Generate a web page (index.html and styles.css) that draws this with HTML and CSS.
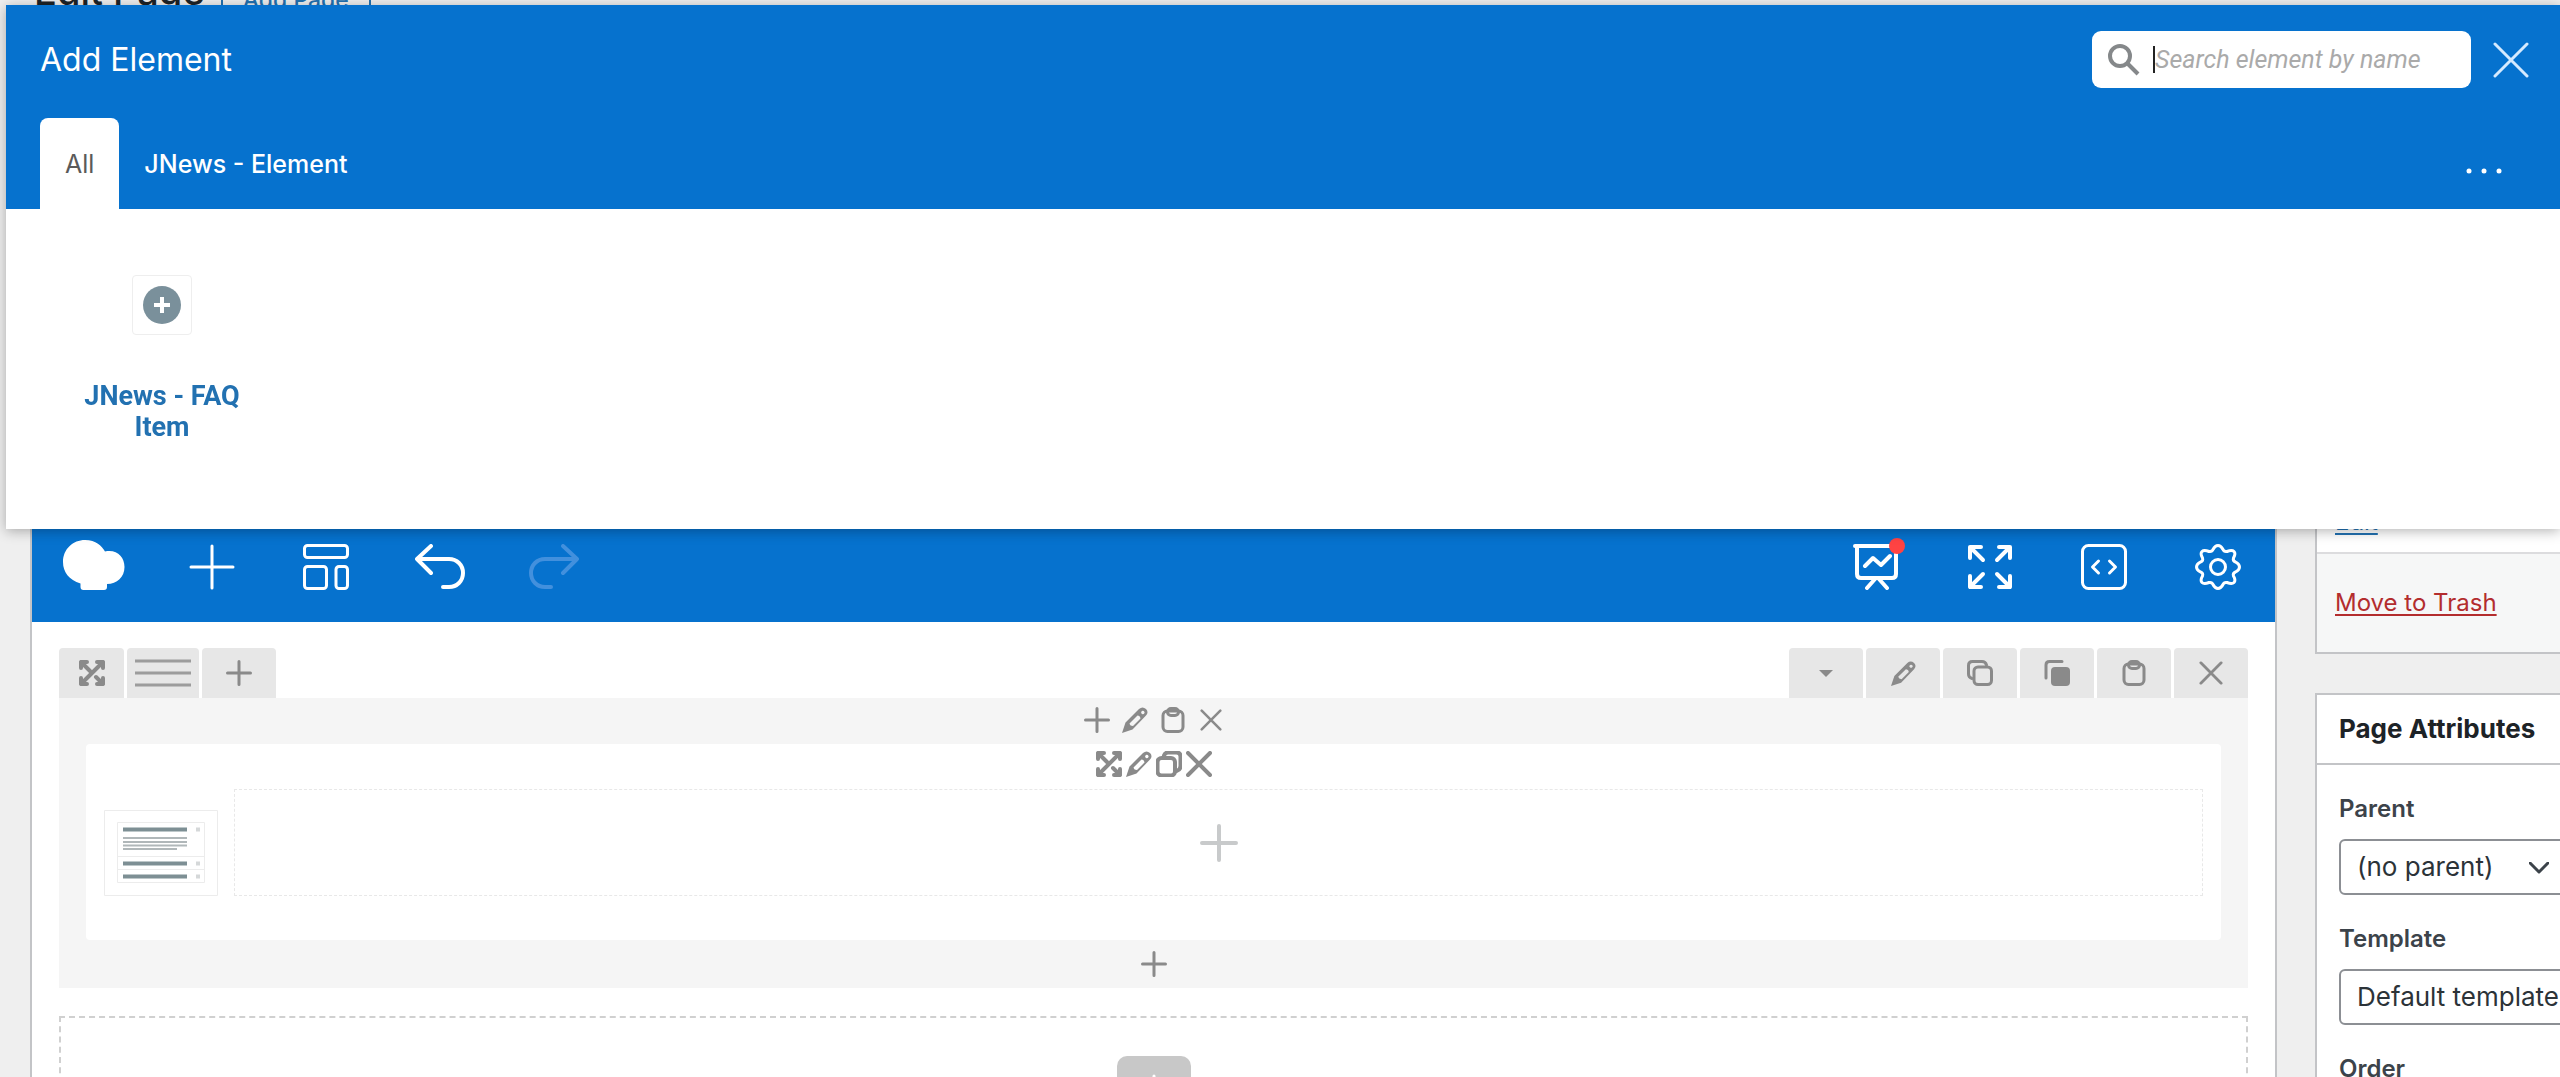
FILE: index.html
```html
<!DOCTYPE html>
<html lang="en">
<head>
<meta charset="utf-8">
<meta name="viewport" content="width=device-width, initial-scale=1">
<title>Edit Page</title>
<link rel="stylesheet" href="styles.css">
</head>
<body>
<svg class="sprite" aria-hidden="true">
  <symbol id="plus" viewBox="0 0 26 26"><path d="M13 1.500v23M1.500 13h23"/></symbol>
  <symbol id="close" viewBox="0 0 26 26"><path d="M2 2l22 22M24 2L2 24"/></symbol>
  <symbol id="move" viewBox="0 0 26 26"><path d="M2 8V2h6M18 2h6v6M24 18v6h-6M8 24H2v-6M2 2l9 9M24 2L2 24M17 17l7 7"/></symbol>
  <symbol id="pencil" viewBox="0 0 26 26"><path class="solid" fill-rule="evenodd" d="M0 26L3.500 15.500 17 2Q20.500-1 24 2Q27 5 24 8.500L10.500 22.500ZM7.500 16.500l8-8q2.500 0 3 3L11 19q-3 0-3.500-2.500ZM20.800 3.800a1.700 1.700 0 1 0 0.100 0Z"/></symbol>
  <symbol id="copy" viewBox="0 0 26 26"><rect x="7" y="7" width="17.500" height="17.500" rx="4"/><path d="M5 18.500Q1.500 17.500 1.500 14V5.500Q1.500 1.500 5.500 1.500H15Q18.500 1.500 19.500 5"/></symbol>
  <symbol id="copy-back" viewBox="0 0 26 26"><rect x="1.500" y="7" width="17.500" height="17.500" rx="4"/><path d="M8 4.500Q9 1.500 12 1.500h8.500q4 0 4 4V15q0 4-4 5"/></symbol>
  <symbol id="duplicate" viewBox="0 0 26 26"><rect class="solid" x="7" y="7" width="19" height="19" rx="4"/><path d="M2 18V5q0-3.500 3.500-3.500H18"/></symbol>
  <symbol id="clipboard" viewBox="0 0 26 26"><rect x="3" y="4" width="20" height="20.500" rx="4.500"/><rect x="7.500" y="1.500" width="11" height="7" rx="3.500"/></symbol>
</svg>

<div class="wrap">
  <header class="page-head">
    <h1>Edit Page</h1>
    <a class="add-page" href="#">Add Page</a>
  </header>

  <div class="columns">
    <main class="editor">
      <nav class="navbar" aria-label="Editor tools">
        <a class="logo" href="#" aria-label="Page builder"><svg width="62" height="50" viewBox="0 0 62 50"><path d="M22 0C33 0 39 6 42 11.500C54 9 61.500 17 61.500 27C61.500 37 54 44 44 44V47Q44 50 41 50H20.500Q17.500 50 17.500 47V43.500C6 40 0 32 0 22C0 9 10 0 22 0Z"/></svg></a>
        <button type="button" aria-label="Add new element"><svg width="46" height="46" viewBox="0 0 46 46"><path d="M23 2v42M2 23h42"/></svg></button>
        <button type="button" aria-label="Templates"><svg width="46" height="46" viewBox="0 0 46 46"><rect x="1.500" y="1.500" width="43" height="12" rx="3"/><rect x="1.500" y="22.500" width="22" height="22" rx="3"/><rect x="33" y="22.500" width="11.500" height="22" rx="3"/></svg></button>
        <button type="button" aria-label="Undo"><svg class="bold" width="50" height="46" viewBox="0 0 50 46"><path d="M16 2L2 15L16 29M2 15H34C42 15 48 21 48 29C48 37 42 43 34 43H28"/></svg></button>
        <button type="button" aria-label="Redo" disabled><svg class="bold" width="50" height="46" viewBox="0 0 50 46"><path d="M34 2L48 15L34 29M48 15H16C8 15 2 21 2 29C2 37 8 43 16 43H22"/></svg></button>
        <span class="spacer"></span>
        <button type="button" class="insights" aria-label="Insights"><svg class="bold" width="46" height="46" viewBox="0 0 46 46"><path d="M2 2h42M4 2v28q0 4 4 4h31q4 0 4-4V2M14 44l8-9M34 44l-8-9M12 22l8-8 8 7 9-9"/></svg><span class="badge"></span></button>
        <button type="button" aria-label="Fullscreen"><svg class="bold" width="46" height="46" viewBox="0 0 46 46"><path d="M3 14V3h11M3 3l13 13M32 3h11v11M43 3L30 16M43 32v11H32M43 43L30 30M14 43H3V32M3 43l13-13"/></svg></button>
        <button type="button" aria-label="Custom code"><svg width="46" height="46" viewBox="0 0 46 46"><rect x="1.500" y="1.500" width="43" height="43" rx="6"/><path d="M17.500 17l-6 6 6 6M28.500 17l6 6-6 6"/></svg></button>
        <button type="button" aria-label="Settings"><svg width="46" height="46" viewBox="0 0 46 46"><circle cx="23" cy="23" r="7.500"/><path d="M23 1.500Q26 1.500 28 5.500Q29 8 32 7.500Q37 5.500 39 7.500Q41 9.500 38.500 14Q37.500 17 40.500 18Q44.500 20 44.500 23Q44.500 26 40.500 28Q37.500 29 38.500 32Q41 36.500 39 38.500Q37 40.500 32 38.500Q29 38 28 40.500Q26 44.500 23 44.500Q20 44.500 18 40.500Q17 38 14 38.500Q9 40.500 7 38.500Q5 36.500 7.500 32Q8.500 29 5.500 28Q1.500 26 1.500 23Q1.500 20 5.500 18Q8.500 17 7.500 14Q5 9.500 7 7.500Q9 5.500 14 7.500Q17 8 18 5.500Q20 1.500 23 1.500Z"/></svg></button>
      </nav>

      <div class="canvas">
        <section class="row">
          <div class="row-controls">
            <button type="button" class="drag" aria-label="Move row"><svg class="bold" width="26" height="26"><use href="#move"/></svg></button>
            <button type="button" class="layout" aria-label="Change layout"><svg width="56" height="28" viewBox="0 0 56 28"><path class="flat" d="M0 2h56M0 14h56M0 26h56"/></svg></button>
            <button type="button" aria-label="Add column"><svg width="26" height="26"><use href="#plus"/></svg></button>
            <span class="spacer"></span>
            <button type="button" aria-label="Toggle row"><svg width="14" height="7" viewBox="0 0 14 7"><path class="solid" d="M0 0h14L7 7z"/></svg></button>
            <button type="button" aria-label="Edit row"><svg width="25" height="25"><use href="#pencil"/></svg></button>
            <button type="button" aria-label="Clone row"><svg width="26" height="26"><use href="#copy"/></svg></button>
            <button type="button" aria-label="Copy row"><svg width="26" height="26"><use href="#duplicate"/></svg></button>
            <button type="button" aria-label="Paste"><svg width="26" height="26"><use href="#clipboard"/></svg></button>
            <button type="button" aria-label="Delete row"><svg width="24" height="24"><use href="#close"/></svg></button>
          </div>

          <div class="column">
            <div class="column-controls">
              <button type="button" aria-label="Prepend element"><svg width="26" height="26"><use href="#plus"/></svg></button>
              <button type="button" aria-label="Edit column"><svg width="26" height="26"><use href="#pencil"/></svg></button>
              <button type="button" aria-label="Paste into column"><svg width="26" height="26"><use href="#clipboard"/></svg></button>
              <button type="button" aria-label="Delete column"><svg width="22" height="22"><use href="#close"/></svg></button>
            </div>
            <div class="element">
              <div class="element-controls">
                <button type="button" aria-label="Move element"><svg width="26" height="26"><use href="#move"/></svg></button>
                <button type="button" aria-label="Edit element"><svg width="26" height="26"><use href="#pencil"/></svg></button>
                <button type="button" aria-label="Clone element"><svg width="26" height="26"><use href="#copy-back"/></svg></button>
                <button type="button" aria-label="Delete element"><svg width="26" height="26"><use href="#close"/></svg></button>
              </div>
              <div class="element-body">
                <svg class="thumb" width="114" height="86" viewBox="0 0 114 86">
                  <rect class="frame" x="0.500" y="0.500" width="113" height="85"/>
                  <path class="frame" d="M13.500 12.500h87v60h-87zM13.500 46.500h87M13.500 59.500h87"/>
                  <path class="bars" d="M19 19.500h64M19 53.500h64M19 66.500h64"/>
                  <path class="lines" d="M19 28h64M19 32h64M19 35.500h64M19 39h54"/>
                  <path class="dots" d="M92 19.500h4M92 53.500h4M92 66.500h4"/>
                </svg>
                <button type="button" class="drop" aria-label="Add child element"><svg width="38" height="38" viewBox="0 0 38 38"><path d="M19 2v34M2 19h34"/></svg></button>
              </div>
            </div>
            <div class="column-foot">
              <button type="button" aria-label="Append element"><svg width="26" height="26"><use href="#plus"/></svg></button>
            </div>
          </div>
        </section>

        <div class="new-row">
          <button type="button" aria-label="Add row"><svg width="38" height="38" viewBox="0 0 38 38"><path d="M19 2v34M2 19h34"/></svg></button>
        </div>
      </div>
    </main>

    <aside class="sidebar">
      <section class="box publish">
        <div class="publish-info"><a href="#">Edit</a></div>
        <div class="publish-foot"><a class="trash" href="#">Move to Trash</a></div>
      </section>
      <section class="box">
        <h2>Page Attributes</h2>
        <div class="fields">
          <label for="parent">Parent</label>
          <div class="select parent">
            <select id="parent"><option>(no parent)</option></select>
            <svg width="20" height="12" viewBox="0 0 20 12"><path d="M1 1l9 9 9-9"/></svg>
          </div>
          <label for="template">Template</label>
          <div class="select template">
            <select id="template"><option>Default template</option></select>
            <svg width="20" height="12" viewBox="0 0 20 12"><path d="M1 1l9 9 9-9"/></svg>
          </div>
          <span class="field-name">Order</span>
        </div>
      </section>
    </aside>
  </div>
</div>

<div class="modal" role="dialog" aria-labelledby="modal-title">
  <div class="modal-head">
    <div class="modal-top">
      <h2 id="modal-title">Add Element</h2>
      <label class="search">
        <svg width="32" height="32" viewBox="0 0 32 32"><circle cx="12" cy="12" r="10"/><path d="M20 20l10 10"/></svg>
        <span class="caret"></span>
        <input type="search" placeholder="Search element by name" aria-label="Search element by name">
      </label>
      <button type="button" class="modal-close" aria-label="Close"><svg width="36" height="36" viewBox="0 0 36 36"><path d="M2 2l32 32M34 2L2 34"/></svg></button>
    </div>
    <div class="tabs">
      <button type="button" class="tab active">All</button>
      <button type="button" class="tab">JNews - Element</button>
      <span class="spacer"></span>
      <button type="button" class="more" aria-label="More"><svg width="36" height="6" viewBox="0 0 36 6"><circle cx="3" cy="3" r="2.500"/><circle cx="18" cy="3" r="2.500"/><circle cx="33" cy="3" r="2.500"/></svg></button>
    </div>
  </div>
  <div class="modal-body">
    <a class="item" href="#">
      <span class="item-icon"><svg width="38" height="38" viewBox="0 0 38 38"><circle cx="19" cy="19" r="19"/><path d="M19 11v16M11 19h16"/></svg></span>
      JNews - FAQ Item
    </a>
  </div>
</div>
</body>
</html>
```
FILE: styles.css
```css
* { box-sizing: border-box; }

body {
  margin: 0;
  height: 100vh;
  overflow: hidden;
  background: #efefef;
  color: #3c434a;
  font: 24px/32px Inter, "Open Sans", sans-serif;
}

button {
  padding: 0;
  border: 0;
  background: none;
  color: inherit;
  font: inherit;
}

button, .logo {
  display: flex;
  align-items: center;
  justify-content: center;
}

svg {
  display: block;
  flex: none;
  fill: none;
  stroke: currentColor;
  stroke-width: 3;
  stroke-linecap: round;
  stroke-linejoin: round;
}

.solid { fill: currentColor; stroke: none; }
.flat { stroke-linecap: butt; stroke-width: 3; }
.bold { stroke-width: 4; }
.sprite { position: absolute; width: 0; height: 0; }
.spacer { flex: 1; }

/* Page behind the dialog, scrolled up under it */
.wrap { margin-top: -33px; padding-left: 30px; }

.page-head {
  display: flex;
  gap: 16px;
  height: 48px;
  padding-left: 4px;
}

h1 {
  margin: 0;
  color: #1d2327;
  font-size: 38px;
  font-weight: 500;
  line-height: 48px;
}

.add-page {
  height: 44px;
  margin-top: 9px;
  padding: 6px 20px;
  border: 2px solid #2271b1;
  border-radius: 4px;
  color: #2271b1;
  font-size: 23px;
  font-weight: 500;
  text-decoration: none;
}

.columns {
  display: flex;
  align-items: flex-start;
  gap: 38px;
  padding-top: 497px;
}

.editor {
  flex: 1;
  min-width: 0;
  border: 2px solid #c3c4c7;
  border-width: 0 2px;
  background: #fff;
}

.navbar {
  display: flex;
  height: 110px;
  background: #0672ce;
  color: #fff;
}

.navbar button { width: 114px; }
.navbar button:disabled { color: #4290dd; }
.logo { width: 123px; padding-bottom: 4px; color: #fff; }
.logo svg { fill: currentColor; stroke: none; }

.insights { position: relative; }
.badge {
  position: absolute;
  top: 26px;
  right: 28px;
  width: 16px;
  height: 16px;
  border-radius: 50%;
  background: #ff4343;
}

.canvas { padding: 26px 27px 0; }

.row-controls {
  display: flex;
  gap: 3px;
  color: #8a8a8a;
}

.row-controls button {
  width: 74px;
  height: 50px;
  border-radius: 4px 4px 0 0;
  background: #e7e7e7;
}

.row-controls .drag { width: 65px; }
.row-controls .layout { width: 72px; color: #9c9c9c; }

.column {
  padding: 0 27px;
  background: #f5f5f5;
  color: #8a8a8a;
}

.column-controls, .column-foot {
  display: flex;
  justify-content: center;
  align-items: center;
  gap: 12px;
  height: 46px;
  padding-bottom: 2px;
}

.column-controls button { width: 26px; }
.column-foot { height: 48px; padding: 0; }

.element {
  padding: 7px 18px 44px;
  border-radius: 4px;
  background: #fff;
}

.element-controls {
  display: flex;
  justify-content: center;
  align-items: center;
  gap: 4px;
  height: 26px;
}

.element-controls svg { stroke-width: 4; }

.element-body {
  display: flex;
  align-items: flex-end;
  gap: 16px;
  padding-top: 12px;
}

.thumb { stroke-width: 1; stroke-linecap: butt; }
.frame { stroke: #ececec; }
.bars { stroke: #7d8f94; stroke-width: 4; }
.lines { stroke: #b0b7b9; stroke-width: 2; }
.dots { stroke: #d5d8d9; stroke-width: 4; }

.drop {
  flex: 1;
  height: 107px;
  border: 1px dashed #e8e8e8;
  color: #c8cacb;
}

.drop svg { stroke-width: 4; }

.new-row {
  display: flex;
  justify-content: center;
  height: 160px;
  margin-top: 28px;
  padding-top: 38px;
  border: 2px dashed #d0d0d0;
}

.new-row button {
  width: 74px;
  height: 74px;
  border-radius: 10px;
  background: #c8c8c8;
  color: #fff;
}

.sidebar { width: 245px; overflow: hidden; }

.box {
  border: 2px solid #c3c4c7;
  border-right: 0;
  background: #fff;
}

.publish { border-top: 0; margin-bottom: 39px; }
.publish-info { height: 42px; padding: 0 18px; border-bottom: 2px solid #dcdcde; line-height: 20px; }
.publish-foot { padding: 33px 18px; background: #f6f7f7; }
.sidebar a { color: #2271b1; text-underline-offset: 3px; }
.sidebar .trash { color: #b32d2e; }

.box h2 {
  margin: 0;
  padding: 18px 22px;
  border-bottom: 2px solid #c3c4c7;
  color: #1d2327;
  font-size: 26px;
  font-weight: 700;
  line-height: 32px;
  white-space: nowrap;
}

.fields { padding: 28px 22px 40px; }
.fields label, .field-name { display: block; font-weight: 600; }

.select {
  position: relative;
  width: 234px;
  margin: 14px 0 28px;
}

.select.template { width: 300px; }

select {
  display: block;
  width: 100%;
  height: 56px;
  padding: 0 16px;
  border: 2px solid #8c8f94;
  border-radius: 6px;
  background: #fff;
  color: #2c3338;
  font: 26px/32px Inter, "Open Sans", sans-serif;
  appearance: none;
}

.select svg {
  position: absolute;
  top: 23px;
  right: 24px;
}

/* Dialog */
.modal {
  position: fixed;
  inset: 5px 0 auto 6px;
  background: #fff;
  box-shadow: 0 2px 12px rgba(0, 0, 0, 0.3);
}

.modal-head { background: #0672ce; color: #fff; }

.modal-top {
  display: flex;
  align-items: flex-start;
  height: 113px;
  padding: 26px 31px 0 34px;
}

.modal h2 {
  flex: 1;
  margin: 0;
  padding-top: 9px;
  font-size: 32px;
  font-weight: 400;
  line-height: 40px;
}

.search {
  display: flex;
  align-items: center;
  width: 379px;
  height: 57px;
  padding-left: 16px;
  border-radius: 9px;
  background: #fff;
  color: #85888a;
}

.search svg { stroke-width: 4; stroke-linecap: butt; }
.caret { width: 2px; height: 27px; margin-left: 13px; background: #222; }

.search input {
  flex: 1;
  min-width: 0;
  padding: 0;
  border: 0;
  outline: 0;
  background: none;
  font: italic 25px/32px Roboto, sans-serif;
}

.search input::placeholder { color: #aaa; opacity: 1; }
.modal-close { height: 57px; margin-left: 22px; color: #d5eaff; }

.tabs { display: flex; padding: 0 58px 0 34px; }

.tab {
  height: 91px;
  padding: 0 25px;
  border-radius: 8px 8px 0 0;
  font-size: 25px;
  font-weight: 500;
}

.tab.active { background: #fff; color: #5a5a5a; font-weight: 400; }
.more { padding-top: 14px; }
.more svg { fill: currentColor; stroke: none; }

.modal-body { padding: 66px 66px 86px; }

.item {
  display: flex;
  flex-direction: column;
  align-items: center;
  gap: 46px;
  width: 180px;
  color: #2271b1;
  font: 700 27px/31px Roboto, sans-serif;
  text-align: center;
  text-decoration: none;
}

.item-icon {
  padding: 10px;
  border: 1px solid #eee;
  border-radius: 4px;
}

.item-icon circle { fill: #7a909b; stroke: none; }
.item-icon path { stroke: #fff; stroke-width: 4; stroke-linecap: butt; }
```
